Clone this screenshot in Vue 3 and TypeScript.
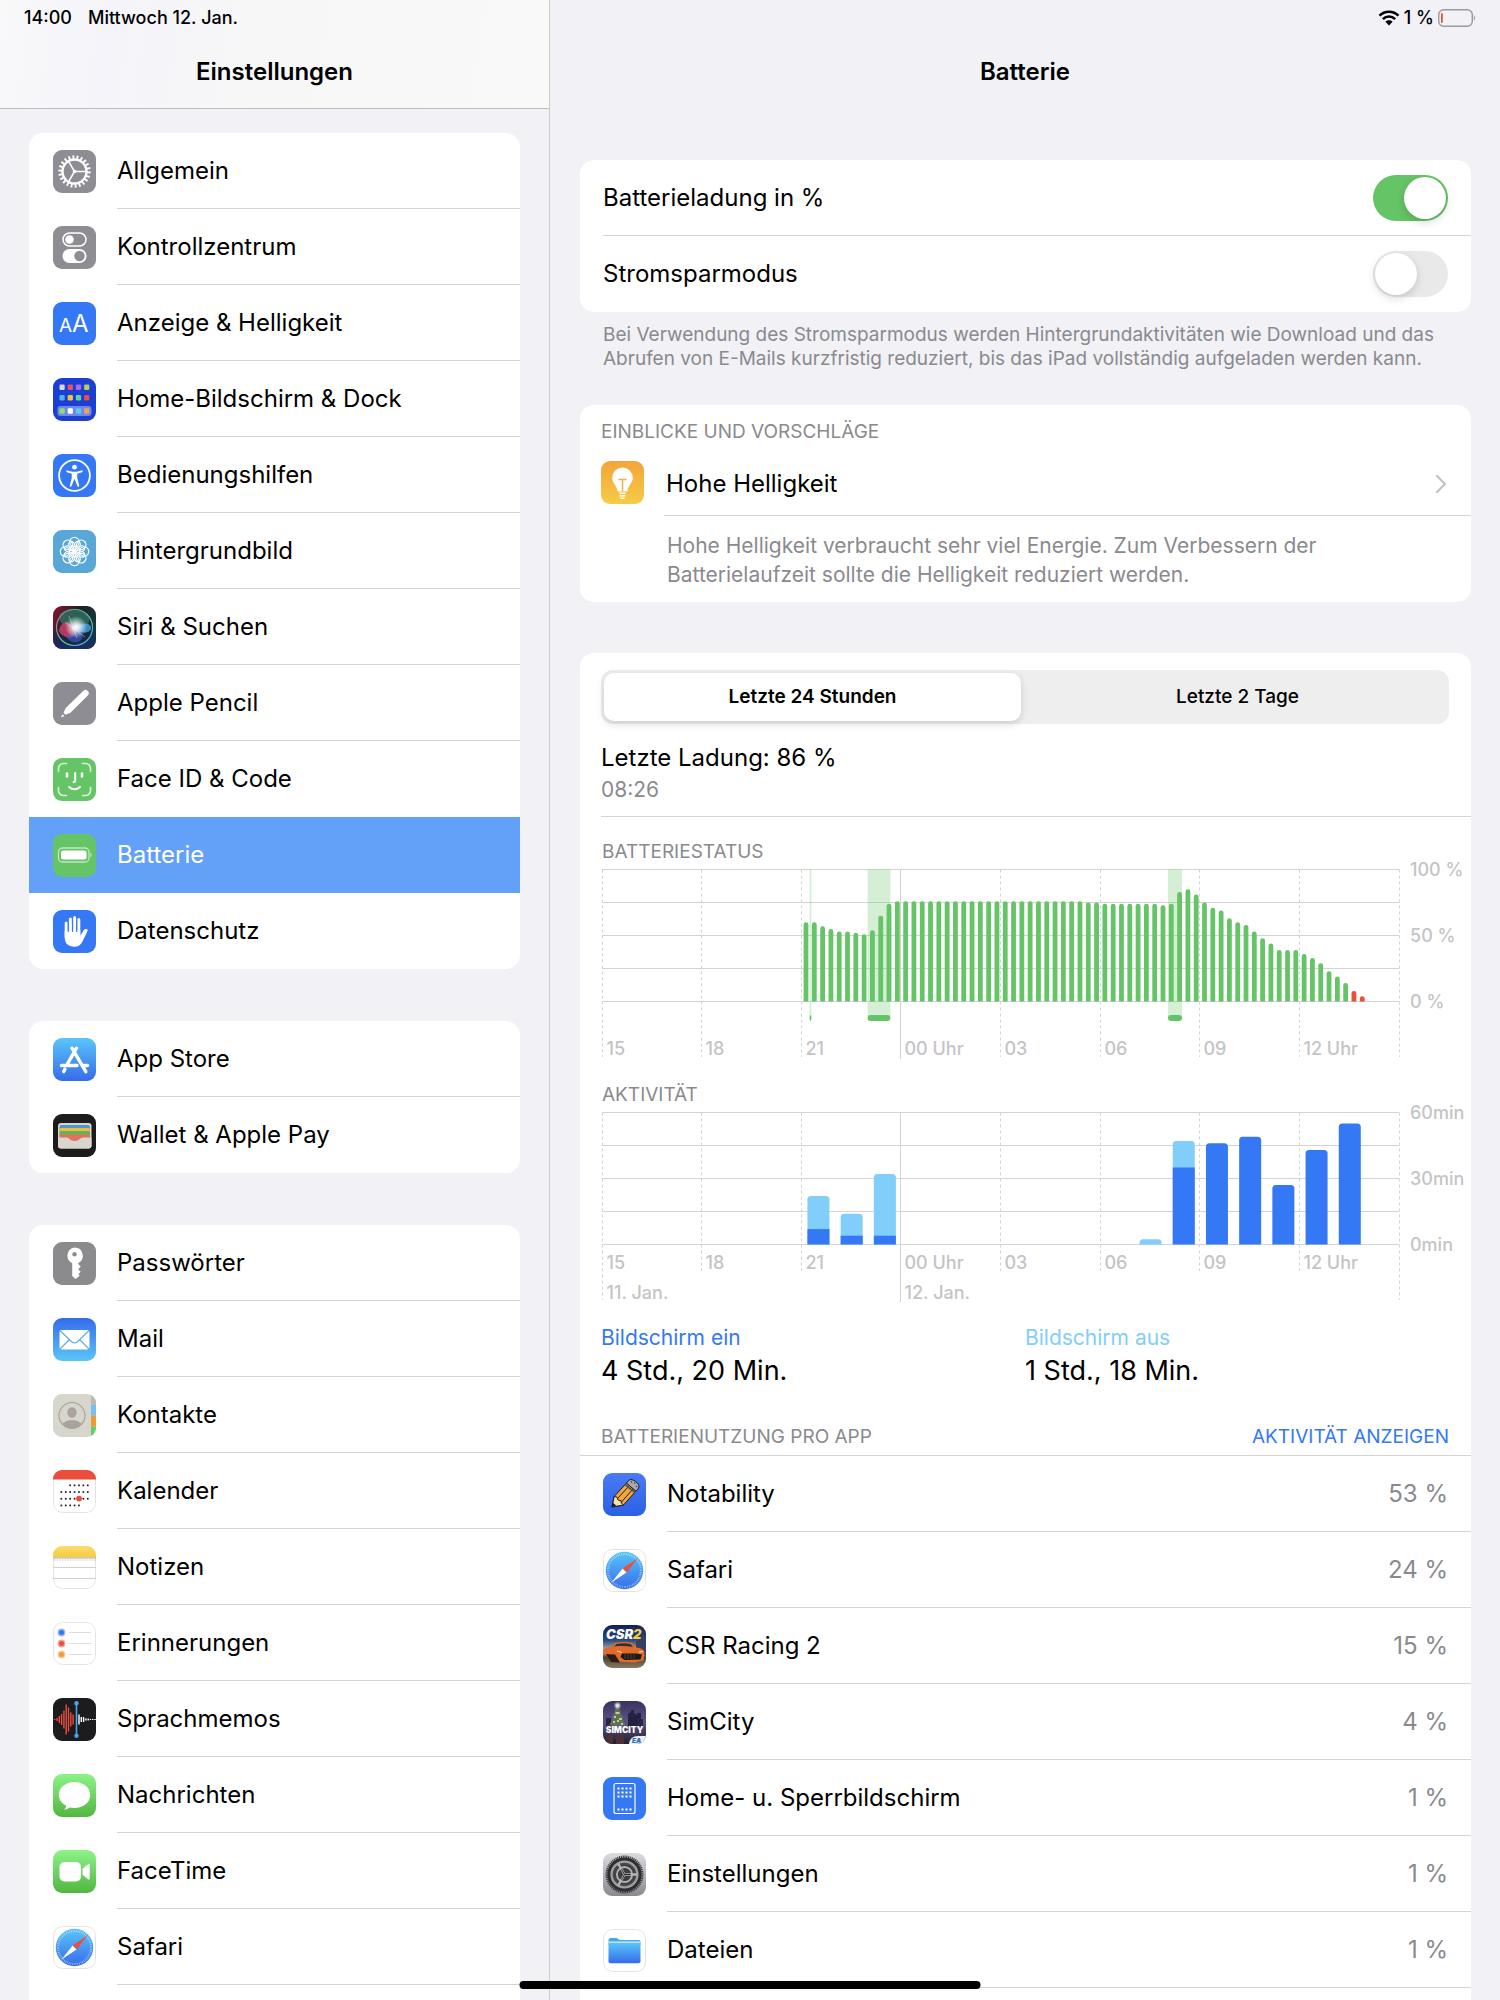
<script setup lang="ts">
import { ref } from 'vue'

interface Entry {
  label: string
  icon: string
}

interface AppUsage extends Entry {
  percent: number
}

const groups: Entry[][] = [
  [
    { label: 'Allgemein', icon: 'general' },
    { label: 'Kontrollzentrum', icon: 'control' },
    { label: 'Anzeige & Helligkeit', icon: 'display' },
    { label: 'Home-Bildschirm & Dock', icon: 'home' },
    { label: 'Bedienungshilfen', icon: 'access' },
    { label: 'Hintergrundbild', icon: 'wallpaper' },
    { label: 'Siri & Suchen', icon: 'siri' },
    { label: 'Apple Pencil', icon: 'pencil' },
    { label: 'Face ID & Code', icon: 'face' },
    { label: 'Batterie', icon: 'battery' },
    { label: 'Datenschutz', icon: 'privacy' },
  ],
  [
    { label: 'App Store', icon: 'appstore' },
    { label: 'Wallet & Apple Pay', icon: 'wallet' },
  ],
  [
    { label: 'Passwörter', icon: 'key' },
    { label: 'Mail', icon: 'mail' },
    { label: 'Kontakte', icon: 'contacts' },
    { label: 'Kalender', icon: 'calendar' },
    { label: 'Notizen', icon: 'notes' },
    { label: 'Erinnerungen', icon: 'reminders' },
    { label: 'Sprachmemos', icon: 'memos' },
    { label: 'Nachrichten', icon: 'messages' },
    { label: 'FaceTime', icon: 'facetime' },
    { label: 'Safari', icon: 'safari' },
  ],
]

const apps: AppUsage[] = [
  { label: 'Notability', icon: 'notability', percent: 53 },
  { label: 'Safari', icon: 'safari', percent: 24 },
  { label: 'CSR Racing 2', icon: 'csr', percent: 15 },
  { label: 'SimCity', icon: 'simcity', percent: 4 },
  { label: 'Home- u. Sperrbildschirm', icon: 'lockscreen', percent: 1 },
  { label: 'Einstellungen', icon: 'settings', percent: 1 },
  { label: 'Dateien', icon: 'files', percent: 1 },
]

const selected = ref('Batterie')
const showPercent = ref(true)
const lowPower = ref(false)
const range = ref<'day' | 'twoDays'>('day')

// Both charts share one time axis: 24 hours starting at 15:00.
const plotWidth = 797
const plotHeight = 132
const plotTop = 6.5
const plotBottom = plotTop + plotHeight
const hourWidth = plotWidth / 24
const snap = (x: number): number => Math.floor(x) + 0.5

const hourLabels = ['15', '18', '21', '00 Uhr', '03', '06', '09', '12 Uhr', '']
const hours = hourLabels.map((label, i) => ({
  label,
  x: snap(i * 3 * hourWidth),
  midnight: i === 3,
  edge: i === 0 || i === 8,
}))
const gridRows = [0, 1, 2, 3, 4].map((i) => plotTop + (i * plotHeight) / 4)

// Battery level per quarter of an hour, from 21:00 on.
const levels: number[] = [
  60, 60, 57, 55, 53, 53, 52, 51, 54, 65, 74,
  ...Array<number>(23).fill(76),
  75, 75, 74, 74, 74, 74, 74, 74, 74, 73, 74,
  83, 85, 81, 75, 71, 69, 63, 60, 58, 53, 48, 44, 39, 39, 39, 36, 33, 29, 23, 19, 14, 8, 4,
]
const slot = hourWidth / 4
const levelBars = levels.map((value, i) => {
  const x = (24 + i) * slot + slot / 2 - 1.8
  const h = (value / 100) * plotHeight
  const top = plotBottom - h
  return {
    low: value < 10,
    d: `M${x} ${plotBottom}V${top + 2.4}a2.4 2.4 0 0 1 4.8 0V${plotBottom}z`,
  }
})
const charges = [
  { x: 207.6, w: 1.8 },
  { x: 265.6, w: 22.8 },
  { x: 566, w: 14 },
]

const activity = [
  { hour: 6, on: 7, off: 15 },
  { hour: 7, on: 4, off: 10 },
  { hour: 8, on: 4, off: 28 },
  { hour: 16, on: 0, off: 2.4 },
  { hour: 17, on: 35, off: 12 },
  { hour: 18, on: 46, off: 0 },
  { hour: 19, on: 49, off: 0 },
  { hour: 20, on: 27, off: 0 },
  { hour: 21, on: 43, off: 0 },
  { hour: 22, on: 55, off: 0 },
]
const minute = plotHeight / 60
const activityBars = activity.map((a) => {
  const x = a.hour * hourWidth + 6.2
  const top = plotBottom - (a.on + a.off) * minute
  return {
    x,
    split: plotBottom - a.on * minute,
    onHeight: a.on * minute,
    light: a.off > 0,
    d: `M${x} ${plotBottom}V${top + 3.5}q0-3.5 3.5-3.5h15q3.5 0 3.5 3.5V${plotBottom}z`,
  }
})

const tileColors = [
  ['#d8d8dc', '#e9535f', '#a66bf0', '#b5cf5a'],
  ['#4fb1ef', '#f5c243', '#63cf9a', '#ea4c46'],
]
const dockColors = ['#8be06c', '#ffffff', '#62c5f5', '#f0a05a']
const petals = [0, 45, 90, 135, 180, 225, 270, 315]
const waveRed = [1, 3, 7, 11, 18, 30, 24, 14, 10]
const waveWhite = [10, 5, 5, 2, 2, 1, 1, 1]
const calendarDots = [
  [2, 3, 4, 5, 6],
  [0, 1, 2, 3, 4, 5, 6],
  [0, 1, 2, 3, 5, 6],
  [0, 1, 2, 3, 4],
]
</script>

<template>
  <svg class="sprite" width="0" height="0" aria-hidden="true">
    <defs>
      <linearGradient id="g-store" x2="0" y2="1"><stop stop-color="#5ac5f8" /><stop offset="1" stop-color="#366ceb" /></linearGradient>
      <linearGradient id="g-mail" x2="0" y2="1"><stop stop-color="#366ceb" /><stop offset="1" stop-color="#5ac5f8" /></linearGradient>
      <linearGradient id="g-green" x2="0" y2="1"><stop stop-color="#8df388" /><stop offset="1" stop-color="#52b63f" /></linearGradient>
      <linearGradient id="g-yellow" x2="0" y2="1"><stop stop-color="#f9dc6e" /><stop offset="1" stop-color="#f6cb3c" /></linearGradient>
      <linearGradient id="g-bulb" x2="0" y2="1"><stop stop-color="#f2a43b" /><stop offset="1" stop-color="#f6cc46" /></linearGradient>
      <linearGradient id="g-nota" x2="0" y2="1"><stop stop-color="#4a7bf5" /><stop offset="1" stop-color="#2a60e6" /></linearGradient>
      <linearGradient id="g-metal" x2="0" y2="1"><stop stop-color="#dcdce0" /><stop offset="1" stop-color="#8a8a8e" /></linearGradient>
      <linearGradient id="g-siri" x2="1" y2="0.5"><stop stop-color="#8c1232" /><stop offset="0.5" stop-color="#1d2029" /><stop offset="1" stop-color="#143b40" /></linearGradient>
      <linearGradient id="g-siri-low" x2="0" y2="1"><stop offset="0.5" stop-color="#16265c" stop-opacity="0" /><stop offset="1" stop-color="#1a2b6a" /></linearGradient>
      <radialGradient id="g-glow"><stop stop-color="#ffffff" /><stop offset="0.3" stop-color="#ffffff" stop-opacity="0.8" /><stop offset="1" stop-color="#ffffff" stop-opacity="0" /></radialGradient>
      <linearGradient id="g-ring" x2="1" y2="1"><stop stop-color="#e0566e" /><stop offset="0.5" stop-color="#5fc79a" /><stop offset="1" stop-color="#4aa5e8" /></linearGradient>
      <linearGradient id="g-csr" x2="0" y2="1"><stop stop-color="#0f2154" /><stop offset="0.35" stop-color="#2a4a7c" /><stop offset="0.6" stop-color="#b7b9b0" /><stop offset="0.75" stop-color="#4c4034" /><stop offset="1" stop-color="#8c7a5c" /></linearGradient>
      <linearGradient id="g-sim" x2="0" y2="1"><stop stop-color="#39335f" /><stop offset="0.5" stop-color="#5b5488" /><stop offset="1" stop-color="#261c2e" /></linearGradient>

      <symbol id="i-general" viewBox="0 0 43 43">
        <rect width="43" height="43" fill="#8e8d93" />
        <g fill="none" stroke="#fff">
          <circle cx="21.5" cy="21.5" r="14.2" stroke-width="4" pathLength="44" stroke-dasharray="0.9 1.1" />
          <circle cx="21.5" cy="21.5" r="12" stroke-width="2.4" />
          <path d="M21.5 21.5H33M21.5 21.5L15.6 11.4M21.5 21.5L15.6 31.6" stroke-width="1.5" />
        </g>
        <circle cx="21.5" cy="21.5" r="1.8" fill="#fff" />
      </symbol>
      <symbol id="i-control" viewBox="0 0 43 43">
        <rect width="43" height="43" fill="#8e8d93" />
        <rect x="10" y="7" width="23" height="13" rx="6.5" fill="none" stroke="#fff" stroke-width="1.5" />
        <circle cx="16.5" cy="13.5" r="4.3" fill="#fff" />
        <rect x="9.5" y="23" width="24" height="14" rx="7" fill="#fff" />
        <circle cx="26.5" cy="30" r="5.2" fill="#8e8d93" />
      </symbol>
      <symbol id="i-display" viewBox="0 0 43 43">
        <rect width="43" height="43" fill="#3478f6" />
        <text x="6" y="30" fill="#fff" font-family="Inter, sans-serif" font-size="19">A</text>
        <text x="19" y="30" fill="#fff" font-family="Inter, sans-serif" font-size="24">A</text>
      </symbol>
      <symbol id="i-home" viewBox="0 0 43 43">
        <rect width="43" height="43" fill="#1a3fd2" />
        <rect x="4.5" y="28" width="34" height="10" rx="3" fill="#6d88e6" />
        <g v-for="(row, r) in tileColors" :key="r">
          <rect v-for="(c, i) in row" :key="c" :x="6.5 + i * 8.2" :y="6.5 + r * 10.5" width="5.2" height="5.4" rx="1.2" :fill="c" />
        </g>
        <rect v-for="(c, i) in dockColors" :key="c" :x="6.5 + i * 8.2" y="30.2" width="5.2" height="5.6" rx="1.2" :fill="c" />
      </symbol>
      <symbol id="i-access" viewBox="0 0 43 43">
        <rect width="43" height="43" fill="#3478f6" />
        <circle cx="21.5" cy="21.5" r="15.4" fill="none" stroke="#fff" stroke-width="1.8" />
        <circle cx="21.5" cy="13.2" r="2.4" fill="#fff" />
        <path d="M14.4 16.4l5 1.3h4.2l5-1.3a.9.9 0 0 1 .4 1.8l-4.8 1.6.1 4.4 1.9 7.4a.9.9 0 0 1-1.8.5l-2.9-7.4-2.9 7.4a.9.9 0 0 1-1.8-.5l1.9-7.4.1-4.4-4.8-1.6a.9.9 0 0 1 .4-1.8z" fill="#fff" />
      </symbol>
      <symbol id="i-wallpaper" viewBox="0 0 43 43">
        <rect width="43" height="43" fill="#58a7d7" />
        <g fill="none" stroke="#fff" stroke-width="1.3">
          <circle v-for="a in petals" :key="a" cx="21.5" cy="12" r="4.7" :transform="`rotate(${a} 21.5 21.5)`" />
          <ellipse v-for="a in petals" :key="'p' + a" cx="21.5" cy="15.2" rx="2.9" ry="4.6" :transform="`rotate(${a + 22.5} 21.5 21.5)`" stroke-width="1.1" />
        </g>
        <circle cx="21.5" cy="21.5" r="2.2" fill="#fff" />
      </symbol>
      <symbol id="i-siri" viewBox="0 0 43 43">
        <rect width="43" height="43" fill="url(#g-siri)" />
        <rect width="43" height="43" fill="url(#g-siri-low)" />
        <circle cx="21.5" cy="21.5" r="18" fill="#1a2638" fill-opacity="0.6" stroke="url(#g-ring)" stroke-width="1.2" />
        <path d="M7 8a20 20 0 0 1 29 2c2 8-4 13-14 12C12 20 4 18 7 8z" fill="#3fae86" fill-opacity="0.45" />
        <path d="M6 24c2-9 9-10 15-3 4 6-2 13-8 10-4-2-7-4-7-7z" fill="#e0416c" fill-opacity="0.75" />
        <path d="M18 23c7-6 18-8 20-2 1 6-9 8-20 2z" fill="#4aa9ef" fill-opacity="0.75" />
        <path d="M14 32c6-7 12-8 16-2-2 7-10 9-16 2z" fill="#3c63d8" fill-opacity="0.6" />
        <path d="M12 16l20 15M16 10l8 22" stroke="#fff" stroke-opacity="0.5" stroke-width="0.7" />
        <circle cx="23" cy="21" r="11" fill="url(#g-glow)" />
      </symbol>
      <symbol id="i-pencil" viewBox="0 0 43 43">
        <rect width="43" height="43" fill="#8e8d93" />
        <path d="M30.2 9a3 3 0 0 1 4.6 4.4L17.4 30.7l-4.9 2-1.9-1.9 2.1-4.8z" fill="#fff" />
        <path d="M9.6 32.2l1.8 1.7-3.6 1.6z" fill="#fff" />
      </symbol>
      <symbol id="i-face" viewBox="0 0 43 43">
        <rect width="43" height="43" fill="#65c466" />
        <g fill="none" stroke="#fff" stroke-linecap="round">
          <path d="M5.5 13.5v-3a5 5 0 0 1 5-5h3M29.5 5.5h3a5 5 0 0 1 5 5v3M37.5 29.5v3a5 5 0 0 1-5 5h-3M13.5 37.5h-3a5 5 0 0 1-5-5v-3" stroke-width="1.7" opacity="0.75" />
          <path d="M14 15.5v3M29 15.5v3" stroke-width="2.6" />
          <path d="M22.2 15v7.500q0 1.500-1.700 1.500" stroke-width="2" />
          <path d="M16 29q5.500 4.500 11 0" stroke-width="2" />
        </g>
      </symbol>
      <symbol id="i-battery" viewBox="0 0 43 43">
        <rect width="43" height="43" fill="#65c466" />
        <rect x="5.5" y="14" width="30.5" height="14" rx="4" fill="none" stroke="#fff" stroke-opacity="0.6" stroke-width="1.3" />
        <rect x="8" y="16.5" width="25.5" height="9" rx="2" fill="#fff" />
        <path d="M37.5 18.500q2.300 2.500 0 5z" fill="#fff" fill-opacity="0.7" />
      </symbol>
      <symbol id="i-privacy" viewBox="0 0 43 43">
        <rect width="43" height="43" fill="#3478f6" />
        <g stroke="#fff" stroke-width="3" stroke-linecap="round" fill="none">
          <path d="M13.2 13v14M17.4 9v16M21.6 7.500v16M25.8 9.500v16" />
        </g>
        <path d="M11.7 20.500h15.600v5.400l3.300-5.600c1-1.500 3.400-1.700 4-.600.300.700-.3 1.700-.800 2.700l-4.300 9.200c-1.700 3.500-4.200 5.200-8.300 5.200-6 0-9.500-3.500-9.500-9.500z" fill="#fff" />
        <path d="M15.3 13v9M19.5 10v12M23.7 10v12" stroke="#3478f6" stroke-width="1.1" />
      </symbol>
      <symbol id="i-appstore" viewBox="0 0 43 43">
        <rect width="43" height="43" fill="url(#g-store)" />
        <g stroke="#fff" stroke-width="3.4" stroke-linecap="round" fill="none">
          <path d="M23.5 10.200L14 26.600M19 10.200l13.800 23.500M8.500 27.500h15.500M29.500 27.500h5M12 31.200l-1.400 2.400" />
        </g>
      </symbol>
      <symbol id="i-wallet" viewBox="0 0 43 43">
        <rect width="43" height="43" fill="#1c1c1e" />
        <rect x="5" y="9" width="33.5" height="25.5" rx="3" fill="#d9d6cc" />
        <rect x="6.5" y="11" width="30.5" height="8" rx="2" fill="#4d96ce" />
        <rect x="6.5" y="14" width="30.5" height="6" rx="1.5" fill="#eebb42" />
        <rect x="6.5" y="17" width="30.5" height="6" rx="1.5" fill="#63b159" />
        <path d="M6.5 20.500h30.500v4H29c-2 0-3 3-7.300 3s-5.300-3-7.300-3H6.500z" fill="#e2725f" />
        <path d="M5 23.500h8.500c2.500 0 3.500 3.500 8.200 3.500s5.700-3.500 8.200-3.500h8.600v8a3 3 0 0 1-3 3H8a3 3 0 0 1-3-3z" fill="#d9d6cc" />
      </symbol>
      <symbol id="i-key" viewBox="0 0 43 43">
        <rect width="43" height="43" fill="#8b8b8e" />
        <path d="M21.5 5.500a8.300 8.300 0 0 1 3.700 15.700v.8l2.500 2.500-2.500 2.700 2.500 2.600-2.300 2.500 1.300 1.500-4.200 3.200-3.300-3V21.200A8.300 8.300 0 0 1 21.500 5.500z" fill="#fff" />
        <circle cx="21.5" cy="12.3" r="2.2" fill="#8b8b8e" />
      </symbol>
      <symbol id="i-mail" viewBox="0 0 43 43">
        <rect width="43" height="43" fill="url(#g-mail)" />
        <rect x="6.5" y="12" width="30" height="19.5" rx="2" fill="#fff" />
        <path d="M7 12.500l11.500 11.200q3 2.600 6 0L36 12.500M7 31l9.500-9.500M36 31l-9.500-9.500" fill="none" stroke="#62aaf3" stroke-width="1.2" />
      </symbol>
      <symbol id="i-contacts" viewBox="0 0 43 43">
        <rect width="43" height="43" fill="#d7d6cd" />
        <rect x="38" width="5" height="11" fill="#bcbab2" />
        <rect x="38" y="11" width="5" height="10.5" fill="#74c0f4" />
        <rect x="38" y="21.5" width="5" height="11" fill="#f09a37" />
        <rect x="38" y="32.5" width="5" height="11" fill="#67ce67" />
        <circle cx="19" cy="21.5" r="13" fill="none" stroke="#a9a39c" stroke-width="1.2" />
        <ellipse cx="19" cy="18.5" rx="4.7" ry="5.2" fill="#a9a39c" />
        <path d="M9.500 30q3-4 9.500-4t9.500 4q-3.500 4.500-9.500 4.500T9.500 30z" fill="#a9a39c" />
      </symbol>
      <symbol id="i-calendar" viewBox="0 0 43 43">
        <rect x="0.5" y="0.5" width="42" height="42" rx="9" fill="#fff" stroke="#e3e3e5" />
        <rect width="43" height="9.5" fill="#ea4e3d" />
        <g fill="#1c1c1e">
          <g v-for="(row, r) in calendarDots" :key="r">
            <rect v-for="c in row" :key="c" :x="7.5 + c * 4.4" :y="14.5 + r * 6.7" width="1.7" height="1.7" />
          </g>
        </g>
        <circle cx="26" cy="28.6" r="2.9" fill="#ea4e3d" />
      </symbol>
      <symbol id="i-notes" viewBox="0 0 43 43">
        <rect x="0.5" y="0.5" width="42" height="42" rx="9" fill="#fff" stroke="#e3e3e5" />
        <rect width="43" height="11.5" fill="url(#g-yellow)" />
        <path d="M0 12h43" stroke="#a8a59a" stroke-width="0.9" />
        <path d="M1 14h42" stroke="#b9b9bb" stroke-width="1.2" stroke-dasharray="1.2 1.5" />
        <path d="M0 21.500h43M0 32.500h43" stroke="#d0d0d2" stroke-width="1" />
      </symbol>
      <symbol id="i-reminders" viewBox="0 0 43 43">
        <rect x="0.5" y="0.5" width="42" height="42" rx="9" fill="#fff" stroke="#e3e3e5" />
        <path d="M16 10.500h22M16 21.500h22M16 32.500h22" stroke="#dcdcde" stroke-width="1.2" />
        <g v-for="(c, i) in ['#3478f6', '#ea4e3d', '#f09a37']" :key="c" :fill="c">
          <circle cx="8.5" :cy="10.5 + i * 11" r="3.9" opacity="0.5" />
          <circle cx="8.5" :cy="10.5 + i * 11" r="2.5" />
        </g>
      </symbol>
      <symbol id="i-memos" viewBox="0 0 43 43">
        <rect width="43" height="43" fill="#1c1c1e" />
        <rect v-for="(h, i) in waveRed" :key="'r' + i" :x="1 + i * 2.3" :y="21.5 - h / 2" width="1.4" :height="h" fill="#ea4e3d" />
        <rect v-for="(h, i) in waveWhite" :key="'w' + i" :x="25.3 + i * 2.3" :y="21.5 - h / 2" width="1.4" :height="h" fill="#fff" />
        <path d="M23.5 5v33" stroke="#4ba2ea" stroke-width="1.6" />
        <circle cx="23.5" cy="5.2" r="2.2" fill="#4ba2ea" />
        <circle cx="23.5" cy="37.8" r="2.2" fill="#4ba2ea" />
      </symbol>
      <symbol id="i-messages" viewBox="0 0 43 43">
        <rect width="43" height="43" fill="url(#g-green)" />
        <path d="M21.5 8c8.800 0 15.700 5.500 15.700 13s-6.900 13-15.700 13c-1.700 0-3.200-.200-4.700-.500-1.500 1.200-3.600 2.200-5.800 2.300 1.200-1.200 2-2.700 2.200-4.100C8.600 29.500 5.800 25.500 5.800 21c0-7.500 6.900-13 15.700-13z" fill="#fff" />
      </symbol>
      <symbol id="i-facetime" viewBox="0 0 43 43">
        <rect width="43" height="43" fill="url(#g-green)" />
        <rect x="6.5" y="12" width="21.5" height="19.5" rx="5" fill="#fff" />
        <path d="M29.5 18.700l5.500-4.500c.9-.7 1.700-.3 1.700.700v13.700c0 1-.8 1.400-1.700.7l-5.500-4.500z" fill="#fff" />
      </symbol>
      <symbol id="i-safari" viewBox="0 0 43 43">
        <rect x="0.5" y="0.5" width="42" height="42" rx="9" fill="#fff" stroke="#e3e3e5" />
        <circle cx="21.5" cy="21.5" r="18.7" fill="url(#g-store)" />
        <circle cx="21.5" cy="21.5" r="16.5" fill="none" stroke="#fff" stroke-opacity="0.6" stroke-width="2.2" pathLength="120" stroke-dasharray="0.7 1.3" />
        <path d="M34.8 9.300L19.600 19.500l3.900 4z" fill="#ea4e3d" />
        <path d="M8.500 33.500l11.100-14 3.900 4z" fill="#fff" />
      </symbol>
      <symbol id="i-bulb" viewBox="0 0 43 43">
        <rect width="43" height="43" fill="url(#g-bulb)" />
        <path d="M21.5 6.500a10.300 10.300 0 0 1 10.300 10.300c0 5.500-4.500 7.200-5.600 13.700h-9.400c-1.100-6.500-5.600-8.200-5.600-13.700A10.300 10.300 0 0 1 21.500 6.500z" fill="#fff" />
        <path d="M17.5 18.500h8M21.500 18.500v12" stroke="#f3b23f" stroke-width="1.5" fill="none" />
        <path d="M18.5 32.300h6M18.500 34.800h6M19.500 37.300h4" stroke="#fff" stroke-width="1.6" />
      </symbol>
      <symbol id="i-notability" viewBox="0 0 43 43">
        <rect width="43" height="43" fill="url(#g-nota)" />
        <g stroke="#1f1c1a" stroke-width="1" stroke-linejoin="round">
          <path d="M9 34l2.200-10.500L23.500 10l9.500 8-12.500 14z" fill="#f0a83c" />
          <path d="M9 34l2.200-10.500 2.600.5 1.300 3 3 .8.500 2.600 1.900 1.600z" fill="#f3dfb8" />
          <path d="M23.500 10l2.700-3c2.700-2.200 11.500 3.500 9.500 8l-2.700 3.300z" fill="#a9abb0" />
          <path d="M14.500 25.500L26.500 12.500M18 29.500l12-13.500" fill="none" />
        </g>
        <path d="M9 34l.9-4.300 3.300 2.700z" fill="#1f1c1a" />
        <path d="M22 11.500l10 8" stroke="#55565b" stroke-width="2" />
        <path d="M28 8l1 2M31.500 9l.5 2M33 13l1 1" stroke="#55565b" stroke-width="1.2" />
      </symbol>
      <symbol id="i-csr" viewBox="0 0 43 43">
        <rect width="43" height="43" fill="url(#g-csr)" />
        <path d="M33 16l10-3v17H33z" fill="#38405a" />
        <path d="M0 25c3-3 6-3 8-3l4-4c7-1.500 13-1 17 0l4 4.500c5 .5 8 2 8.500 5l-1 8-9 2-20-1-6-6-5-1z" fill="#df6a2c" />
        <path d="M11 21.500l2.500-2.500c5-1 10-1 14 0l2.500 3c-6-1-13-1.200-19-.5z" fill="#33302f" />
        <path d="M19 28.500h14l6 1-1.500 5-16 .5-4-3z" fill="#1d1817" />
        <path d="M14 26l5 1.500M36 27l4-.5" stroke="#f7dba6" stroke-width="1.2" />
        <path d="M3 29l5 8 9 .5-5-8z" fill="#2a1d18" />
        <path d="M22 29v5M25 29v5M28 29v5M31 29v5" stroke="#6c5648" stroke-width="0.7" />
        <text x="3" y="14" font-family="Inter, sans-serif" font-size="13" font-weight="900" font-style="italic" fill="#fff">CSR<tspan fill="#f6cf3e">2</tspan></text>
      </symbol>
      <symbol id="i-simcity" viewBox="0 0 43 43">
        <rect width="43" height="43" fill="url(#g-sim)" />
        <path d="M25 13l3-2v-2h3v3l3 2v-2h4v14H25z" fill="#242040" />
        <path d="M3 17h5v10H3zM34 18h6v8h-6z" fill="#2a2548" />
        <path d="M14.500 4l3.500 7-1 .5 3.500 5.500-1.500.5 4 7H6l4-7-1.500-.5 3.500-5.500-1-.5z" fill="#5d7357" />
        <path d="M12.500 12h4M11 16h2M16 18h3M10 21h2M14 20h2M18 23h2" stroke="#f5e3a8" stroke-width="1.3" />
        <circle cx="14.5" cy="4.5" r="4" fill="url(#g-glow)" />
        <path d="M4 33h6v10H4zM13 34h8v9h-8z" fill="#4b3038" />
        <path d="M26 43q1-8 9-8h8v8z" fill="#e8eff6" />
        <text x="21.5" y="31.5" text-anchor="middle" font-family="Inter, sans-serif" font-size="8.5" font-weight="900" fill="#fff">SIMCITY</text>
        <text x="29" y="42" font-family="Inter, sans-serif" font-size="6.5" font-weight="900" font-style="italic" fill="#2a6fb4">EA</text>
      </symbol>
      <symbol id="i-lockscreen" viewBox="0 0 43 43">
        <rect width="43" height="43" fill="#3478f6" />
        <rect x="11" y="6.5" width="21" height="30" rx="2" fill="none" stroke="#fff" stroke-width="1.2" />
        <path d="M14.500 11.500h14M14.500 15.500h14M14.500 19.500h14M14.500 32.500h14" stroke="#fff" stroke-width="2" stroke-dasharray="2 2" />
      </symbol>
      <symbol id="i-settings" viewBox="0 0 43 43">
        <rect width="43" height="43" fill="url(#g-metal)" />
        <circle cx="21.5" cy="21.5" r="17.8" fill="none" stroke="#37373a" stroke-width="2.4" pathLength="120" stroke-dasharray="1.2 0.8" />
        <circle cx="21.5" cy="21.5" r="15.6" fill="#a0a0a4" stroke="#2f2f31" stroke-width="3" />
        <circle cx="21.5" cy="21.5" r="10.8" fill="#3c3c3e" stroke="#48484a" stroke-width="2" />
        <circle cx="21.5" cy="21.5" r="7.6" fill="#3c3c3e" stroke="#b0b0b3" stroke-width="2" />
        <path d="M21.500 21.500h13M21.500 21.500l-6.500-11.200M21.500 21.500l-6.500 11.200" stroke="#b4b4b7" stroke-width="2.4" />
        <path d="M21.500 21.500h6M21.500 21.500l-3-5.200M21.500 21.500l-3 5.200" stroke="#2a2a2c" stroke-width="1" />
      </symbol>
      <symbol id="i-files" viewBox="0 0 43 43">
        <rect x="0.5" y="0.5" width="42" height="42" rx="9" fill="#fff" stroke="#e3e3e5" />
        <path d="M5.500 11q0-2 2-2h6.500l2.500 2H36q1.500 0 1.500 1.500V16h-32z" fill="#45a9ea" />
        <rect x="5.5" y="12.5" width="32" height="2" fill="#d5edfb" />
        <path d="M5.500 13.700h32v18.500q0 2-2 2h-28q-2 0-2-2z" fill="url(#g-store)" />
      </symbol>
    </defs>
  </svg>

  <div class="screen">
    <aside class="sidebar">
      <header class="pane-header bordered">
        <div class="status"><time>14:00</time><span>Mittwoch 12. Jan.</span></div>
        <h1>Einstellungen</h1>
      </header>
      <nav class="groups" aria-label="Einstellungen">
        <ul v-for="(group, g) in groups" :key="g" class="group">
          <li v-for="item in group" :key="item.label">
            <a
              href="#"
              class="row"
              :class="{ active: selected === item.label }"
              @click.prevent="selected = item.label"
            >
              <svg class="icon" aria-hidden="true"><use :href="'#i-' + item.icon" /></svg>
              <span class="row-body">{{ item.label }}</span>
            </a>
          </li>
        </ul>
      </nav>
    </aside>

    <main class="detail">
      <header class="pane-header">
        <div class="status end">
          <svg width="22" height="16" viewBox="0 0 22 16" aria-hidden="true">
            <g fill="none" stroke="#000" stroke-width="2.6">
              <path d="M1.500 5.700a13.400 13.400 0 0 1 19 0" />
              <path d="M4.900 9.100a8.600 8.600 0 0 1 12.200 0" />
            </g>
            <path d="M11 15.500l-3.600-3.700a5.100 5.100 0 0 1 7.200 0z" />
          </svg>
          <span>1 %</span>
          <svg width="38" height="18" viewBox="0 0 38 18" aria-hidden="true">
            <rect x="0.7" y="0.7" width="33.6" height="16.6" rx="5" fill="none" stroke="#9b9b9f" stroke-width="1.4" />
            <rect x="3" y="4" width="1.8" height="10" rx="0.9" fill="#eb4e3d" />
            <path d="M35.800 6q2.400 3 0 6z" fill="#9b9b9f" />
          </svg>
        </div>
        <h1>Batterie</h1>
      </header>

      <section class="card toggles">
        <label class="toggle-row">
          <span>Batterieladung in %</span>
          <input v-model="showPercent" type="checkbox" role="switch" class="switch" />
        </label>
        <label class="toggle-row">
          <span>Stromsparmodus</span>
          <input v-model="lowPower" type="checkbox" role="switch" class="switch" />
        </label>
      </section>
      <p class="footnote">
        Bei Verwendung des Stromsparmodus werden Hintergrundaktivitäten wie Download und das<br />
        Abrufen von E-Mails kurzfristig reduziert, bis das iPad vollständig aufgeladen werden kann.
      </p>

      <section class="card insights">
        <h2 class="caption">EINBLICKE UND VORSCHLÄGE</h2>
        <a href="#" class="insight" @click.prevent>
          <svg class="icon" aria-hidden="true"><use href="#i-bulb" /></svg>
          <span class="insight-body">
            <span>Hohe Helligkeit</span>
            <svg width="12" height="20" viewBox="0 0 12 20" aria-hidden="true">
              <path d="M2 2l8 8-8 8" fill="none" stroke="#c4c4c7" stroke-width="2.4" stroke-linecap="round" stroke-linejoin="round" />
            </svg>
          </span>
        </a>
        <p class="insight-text">
          Hohe Helligkeit verbraucht sehr viel Energie. Zum Verbessern der<br />
          Batterielaufzeit sollte die Helligkeit reduziert werden.
        </p>
      </section>

      <section class="card usage">
        <div class="segments">
          <button type="button" :class="{ on: range === 'day' }" :aria-pressed="range === 'day'" @click="range = 'day'">Letzte 24 Stunden</button>
          <button type="button" :class="{ on: range === 'twoDays' }" :aria-pressed="range === 'twoDays'" @click="range = 'twoDays'">Letzte 2 Tage</button>
        </div>

        <div class="last-charge">
          <p>Letzte Ladung: 86 %</p>
          <p class="muted">08:26</p>
        </div>

        <div class="charts">
          <h2 class="caption">BATTERIESTATUS</h2>
          <svg class="chart" viewBox="0 0 869 221" role="img" aria-label="Batteriestatus">
            <g class="grid">
              <line v-for="y in gridRows" :key="y" x1="0" :x2="plotWidth" :y1="y" :y2="y" />
              <line
                v-for="h in hours"
                :key="h.x"
                :x1="h.x"
                :x2="h.x"
                :y1="plotTop"
                :y2="h.midnight ? 196 : 194"
                :class="{ dashed: !h.midnight }"
              />
            </g>
            <g v-for="c in charges" :key="c.x">
              <rect :x="c.x" :y="plotTop" :width="c.w" height="148" class="charge-band" />
              <rect :x="c.x" y="152" :width="c.w" height="6" rx="3" class="level" />
            </g>
            <path v-for="(b, i) in levelBars" :key="i" :d="b.d" :class="b.low ? 'level-low' : 'level'" />
            <g class="axis">
              <text v-for="h in hours" :key="h.x" :x="h.x + 4" y="192">{{ h.label }}</text>
              <text x="808" y="13">100 %</text>
              <text x="808" y="79">50 %</text>
              <text x="808" y="145">0 %</text>
            </g>
          </svg>

          <h2 class="caption">AKTIVITÄT</h2>
          <svg class="chart" viewBox="0 0 869 200" role="img" aria-label="Aktivität">
            <g class="grid">
              <line v-for="y in gridRows" :key="y" x1="0" :x2="plotWidth" :y1="y" :y2="y" />
              <line
                v-for="h in hours"
                :key="h.x"
                :x1="h.x"
                :x2="h.x"
                :y1="plotTop"
                :y2="h.midnight ? 196 : h.edge ? 194 : 165"
                :class="{ dashed: !h.midnight }"
              />
            </g>
            <g v-for="b in activityBars" :key="b.x">
              <path :d="b.d" :class="b.light ? 'screen-off' : 'screen-on'" />
              <rect v-if="b.light" :x="b.x" :y="b.split" width="22" :height="b.onHeight" class="screen-on" />
            </g>
            <g class="axis">
              <text v-for="h in hours" :key="h.x" :x="h.x + 4" y="163">{{ h.label }}</text>
              <text :x="hours[0].x + 4" y="193">11. Jan.</text>
              <text :x="hours[3].x + 4" y="193">12. Jan.</text>
              <text x="808" y="13">60min</text>
              <text x="808" y="79">30min</text>
              <text x="808" y="145">0min</text>
            </g>
          </svg>
        </div>

        <dl class="totals">
          <div>
            <dt class="on-label">Bildschirm ein</dt>
            <dd>4 Std., 20 Min.</dd>
          </div>
          <div>
            <dt class="off-label">Bildschirm aus</dt>
            <dd>1 Std., 18 Min.</dd>
          </div>
        </dl>

        <div class="apps-head">
          <h2 class="caption">BATTERIENUTZUNG PRO APP</h2>
          <button type="button" class="link">AKTIVITÄT ANZEIGEN</button>
        </div>
        <ul class="apps">
          <li v-for="app in apps" :key="app.label" class="app">
            <svg class="icon" aria-hidden="true"><use :href="'#i-' + app.icon" /></svg>
            <div class="app-body">
              <span>{{ app.label }}</span>
              <span class="muted">{{ app.percent }} %</span>
            </div>
          </li>
        </ul>
      </section>
    </main>
    <div class="home-indicator"></div>
  </div>
</template>

<style>
body {
  background: #f1f1f6;
}
</style>

<style scoped>
.sprite {
  position: absolute;
}

.screen {
  display: grid;
  grid-template-columns: 550px 1fr;
  min-height: 100vh;
  background: #f1f1f6;
  color: #000;
  font-family: Inter, "Noto Sans", sans-serif;
  font-size: 24px;
  line-height: 32px;
}

h1,
h2,
p,
ul,
dl,
dd {
  margin: 0;
  padding: 0;
}

ul {
  list-style: none;
}

a {
  color: inherit;
  text-decoration: none;
}

button {
  border: 0;
  padding: 0;
  background: none;
  color: inherit;
  font: inherit;
}

.sidebar {
  display: flex;
  flex-direction: column;
  box-sizing: border-box;
  border-right: 1px solid #cbcbd0;
}

.pane-header {
  height: 108px;
}

.pane-header.bordered {
  border-bottom: 1px solid #bdbdc1;
  background: linear-gradient(100deg, #f9f9fa, #f4f4fa 20%, #f7f7f8 45%, #f9f9f9);
}

.status {
  display: flex;
  align-items: center;
  gap: 16px;
  height: 35px;
  padding: 0 24px;
  font-size: 18px;
  font-weight: 500;
}

.status.end {
  justify-content: flex-end;
  gap: 4px;
}

h1 {
  font-size: 24px;
  font-weight: 600;
  line-height: 73px;
  text-align: center;
}

.groups {
  display: flex;
  flex: 1;
  flex-direction: column;
  gap: 52px;
  padding: 24px 29px 0;
}

.group {
  overflow: hidden;
  border-radius: 14px;
  background: #fff;
}

.group:last-child {
  flex: 1;
  border-radius: 14px 14px 0 0;
}

.row {
  display: flex;
  align-items: center;
  gap: 21px;
  height: 76px;
  padding-left: 24px;
}

.icon {
  flex: none;
  width: 43px;
  height: 43px;
  border-radius: 9px;
}

.row-body {
  flex: 1;
  box-sizing: border-box;
  height: 76px;
  border-bottom: 1px solid #d3d3d6;
  line-height: 76px;
}

.group:not(:last-child) li:last-child .row-body,
li:has(+ li .active) .row-body,
.row.active .row-body {
  border-color: transparent;
}

.row.active {
  background: #63a0f8;
  color: #fff;
}

.detail {
  display: flex;
  flex-direction: column;
}

.card {
  margin: 0 29px 0 30px;
  border-radius: 14px;
  background: #fff;
}

.toggles {
  margin-top: 52px;
  padding-left: 23px;
}

.toggle-row {
  display: flex;
  align-items: center;
  justify-content: space-between;
  box-sizing: border-box;
  height: 76px;
  padding-right: 23px;
}

.toggle-row:first-child {
  border-bottom: 1px solid #d3d3d6;
}

.switch {
  width: 75px;
  height: 46px;
  margin: 0;
  padding: 2px;
  box-sizing: border-box;
  appearance: none;
  border-radius: 23px;
  background: #e9e9ea;
}

.switch::before {
  display: block;
  width: 42px;
  height: 42px;
  border-radius: 21px;
  background: #fff;
  box-shadow: 0 3px 8px rgba(0, 0, 0, 0.16);
  content: "";
}

.switch:checked {
  padding-left: 31px;
  background: #65c466;
}

.footnote {
  margin: 11px 29px 34px 53px;
  color: #8a8a8e;
  font-size: 19px;
  line-height: 24px;
}

.caption {
  color: #8a8a8e;
  font-size: 19px;
  font-weight: 400;
  line-height: 22px;
}

.insights {
  padding: 16px 0 13px 21px;
}

.insight {
  display: flex;
  align-items: center;
  gap: 20px;
  height: 73px;
}

.insight-body {
  display: flex;
  flex: 1;
  align-items: center;
  justify-content: space-between;
  box-sizing: border-box;
  height: 73px;
  padding: 9px 24px 0 2px;
  border-bottom: 1px solid #d3d3d6;
}

.insight .icon {
  margin-top: 6px;
}

.insight-text {
  padding: 15px 0 0 66px;
  color: #8a8a8e;
  font-size: 21px;
  line-height: 29px;
}

.usage {
  flex: 1;
  margin-top: 51px;
  padding-top: 17px;
  border-radius: 14px 14px 0 0;
}

.segments {
  display: flex;
  gap: 8px;
  box-sizing: border-box;
  height: 54px;
  margin: 0 22px 18px 21px;
  padding: 3px;
  border-radius: 12px;
  background: #eeeeee;
}

.segments button {
  flex: 1;
  border-radius: 10px;
  font-size: 19px;
  font-weight: 500;
}

.segments .on {
  background: #fff;
  box-shadow: 0 3px 8px rgba(0, 0, 0, 0.14);
  font-weight: 600;
}

.last-charge {
  margin-left: 21px;
  padding-bottom: 10px;
  border-bottom: 1px solid #d3d3d6;
}

.last-charge .muted {
  font-size: 21px;
}

.muted {
  color: #8a8a8e;
}

.charts {
  padding: 24px 0 0 22px;
}

.chart {
  display: block;
  width: 100%;
  overflow: visible;
}

.grid line {
  stroke: #d3d3d5;
  stroke-width: 1;
}

.grid .dashed {
  stroke-dasharray: 3 3;
}

.charge-band {
  fill: #65c466;
  fill-opacity: 0.28;
}

.level {
  fill: #65c466;
}

.level-low {
  fill: #eb4e3d;
}

.screen-on {
  fill: #3478f6;
}

.screen-off {
  fill: #81cefa;
}

.axis text {
  fill: #c4c4c6;
  font-size: 18px;
  font-weight: 500;
}

.totals {
  display: grid;
  grid-template-columns: 1fr 1fr;
  margin: 17px 22px 37px 21px;
}

.totals dt {
  font-size: 21px;
  line-height: 30px;
}

.totals dd {
  font-size: 27px;
  line-height: 36px;
}

.on-label {
  color: #3478f6;
}

.off-label {
  color: #81cefa;
}

.apps-head {
  display: flex;
  justify-content: space-between;
  padding: 0 22px 7px 21px;
  border-bottom: 1px solid #d3d3d6;
}

.link {
  color: #3478f6;
  font-size: 19px;
  line-height: 22px;
}

.app {
  display: flex;
  align-items: center;
  gap: 21px;
  height: 76px;
  padding-left: 23px;
}

.app-body {
  display: flex;
  flex: 1;
  align-items: center;
  justify-content: space-between;
  box-sizing: border-box;
  height: 76px;
  padding-right: 23px;
  border-bottom: 1px solid #d3d3d6;
}

.home-indicator {
  position: fixed;
  bottom: 11px;
  left: 50%;
  width: 461px;
  height: 8px;
  border-radius: 4px;
  background: #000;
  transform: translateX(-50%);
}
</style>
